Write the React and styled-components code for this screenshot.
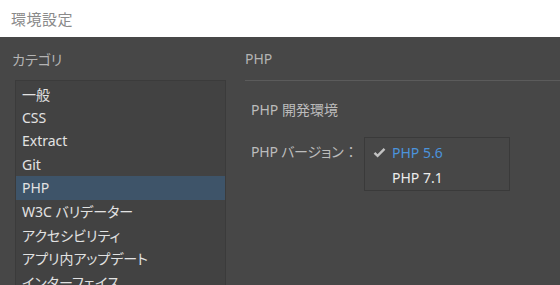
import React from "react";
import styled, { createGlobalStyle } from "styled-components";

const Global = createGlobalStyle`
  html, body { margin: 0; padding: 0; background: #474747; }
  body {
    font-family: "Noto Sans", "Noto Sans CJK JP", sans-serif;
    font-feature-settings: "palt";
    overflow: hidden;
  }
`;

const Window = styled.div`
  width: 560px;
  height: 285px;
  display: flex;
  flex-direction: column;
  background: #474747;
  overflow: hidden;
`;

const TitleBar = styled.div`
  height: 37px;
  flex: none;
  background: #ffffff;
  display: flex;
  align-items: center;
  padding-left: 11px;
  font-size: 15px;
  color: #8a8a8a;
  letter-spacing: 0.5px;
`;

const Body = styled.div`
  flex: 1;
  display: grid;
  grid-template-columns: 226px 1fr;
  min-height: 0;
`;

const Column = styled.div`
  display: flex;
  flex-direction: column;
  min-height: 0;
`;

const Heading = styled.div`
  height: 43px;
  flex: none;
  display: flex;
  align-items: center;
  padding-left: ${(p) => p.$pad}px;
  font-size: 14px;
  color: #b4b4b4;
`;

const List = styled.div`
  margin-left: 15px;
  flex: 1;
  background: #424242;
  border: 1px solid #3b3b3b;
  border-bottom: none;
  display: flex;
  flex-direction: column;
  padding-top: 1px;
`;

const Item = styled.div`
  height: 23.5px;
  flex: none;
  display: flex;
  align-items: center;
  padding-left: 6px;
  font-size: 14px;
  color: #e2e2e2;
  background: ${(p) => (p.$selected ? "#3e5469" : "transparent")};
  white-space: nowrap;
`;

const Panel = styled.div`
  margin-left: 19px;
  border-top: 1px solid #5b5b5b;
  padding: 18px 0 0 6px;
  display: flex;
  flex-direction: column;
`;

const Section = styled.div`
  font-size: 14px;
  color: #bcbcbc;
  height: 20px;
  display: flex;
  align-items: center;
`;

const Row = styled.div`
  display: flex;
  align-items: flex-start;
  margin-top: 18px;
`;

const Label = styled.div`
  font-size: 14px;
  color: #bcbcbc;
  width: 113px;
  padding-top: 4px;
  white-space: nowrap;
  letter-spacing: -0.2px;
`;

const Colon = styled.span`
  margin-left: 4px;
`;

const Options = styled.div`
  width: 146px;
  height: 54px;
  border: 1px solid #3a3a3a;
  display: flex;
  flex-direction: column;
  padding-top: 2px;
  box-sizing: border-box;
`;

const Option = styled.div`
  height: 25px;
  display: flex;
  align-items: center;
  font-size: 14px;
  color: ${(p) => (p.$active ? "#4b93dc" : "#ececec")};
`;

const Check = styled.span`
  width: 27px;
  display: flex;
  justify-content: center;
  padding-left: 2px;
  box-sizing: border-box;
`;

const items = [
  "一般",
  "CSS",
  "Extract",
  "Git",
  "PHP",
  "W3C バリデーター",
  "アクセシビリティ",
  "アプリ内アップデート",
  "インターフェイス",
];

export default function App() {
  return (
    <Window>
      <Global />
      <TitleBar>環境設定</TitleBar>
      <Body>
        <Column>
          <Heading $pad={12}>カテゴリ</Heading>
          <List>
            {items.map((t) => (
              <Item key={t} $selected={t === "PHP"}>
                {t}
              </Item>
            ))}
          </List>
        </Column>
        <Column>
          <Heading $pad={19}>PHP</Heading>
          <Panel>
            <Section>PHP 開発環境</Section>
            <Row>
              <Label>
                PHP バージョン<Colon>：</Colon>
              </Label>
              <Options>
                <Option $active>
                  <Check>
                    <svg width="13" height="11" viewBox="0 0 13 11">
                      <path d="M1.5 5.8 L4.6 8.8 L11.5 1.8" fill="none" stroke="#c2c2c2" strokeWidth="2.4" />
                    </svg>
                  </Check>
                  PHP 5.6
                </Option>
                <Option>
                  <Check />
                  PHP 7.1
                </Option>
              </Options>
            </Row>
          </Panel>
        </Column>
      </Body>
    </Window>
  );
}
